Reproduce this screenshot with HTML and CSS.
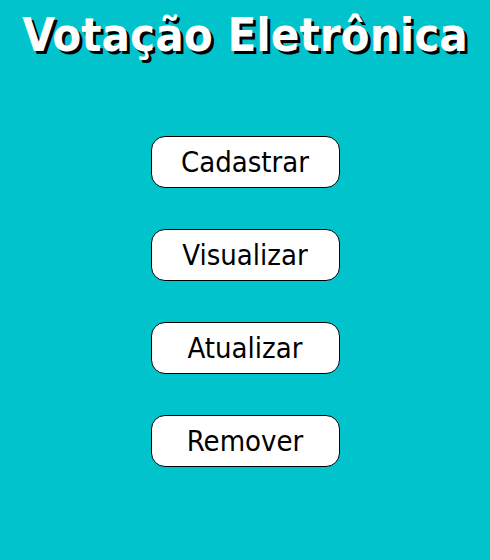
FILE: index.html
```html
<!DOCTYPE html>
<html lang="pt-BR">
<head>
<meta charset="utf-8">
<title>Votação Eletrônica</title>
<link rel="stylesheet" href="styles.css">
</head>
<body>
<main class="page">
  <h1 class="title">Votação Eletrônica</h1>
  <nav class="menu">
    <button class="btn">Cadastrar</button>
    <button class="btn">Visualizar</button>
    <button class="btn">Atualizar</button>
    <button class="btn">Remover</button>
  </nav>
</main>
</body>
</html>
```
FILE: styles.css
```css
html, body {
  margin: 0;
  padding: 0;
  height: 100%;
}
body {
  background: #00c3cc;
  font-family: "DejaVu Sans Condensed", "DejaVu Sans", sans-serif;
}
.page {
  display: flex;
  flex-direction: column;
  align-items: center;
}
.title {
  margin: 6px 0 0 0;
  font-size: 47px;
  font-weight: bold;
  color: #fff;
  text-shadow: 3px 3px 0 #000;
  line-height: 58px;
}
.menu {
  display: flex;
  flex-direction: column;
  align-items: center;
  gap: 41px;
  margin-top: 72px;
}
.btn {
  width: 189px;
  height: 52px;
  background: #fff;
  border: 1.5px solid #000;
  border-radius: 14px;
  font-family: "DejaVu Sans Condensed", "DejaVu Sans", sans-serif;
  font-size: 29px;
  color: #000;
  padding: 0;
}
```
